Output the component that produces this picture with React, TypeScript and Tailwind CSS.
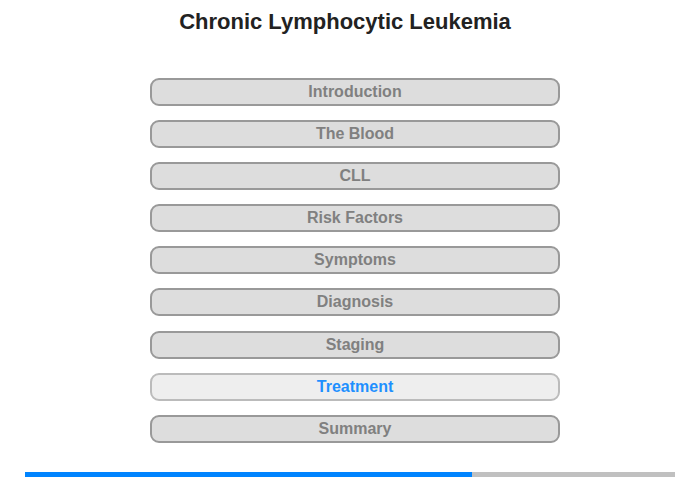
const sections = [
  "Introduction",
  "The Blood",
  "CLL",
  "Risk Factors",
  "Symptoms",
  "Diagnosis",
  "Staging",
  "Treatment",
  "Summary",
];

const current = "Treatment";

export default function App() {
  return (
    <div className="w-[700px] h-[480px] bg-white font-['Liberation_Sans',Arial,sans-serif] overflow-hidden">
      <h1 className="pt-[9px] text-center text-[22px] leading-[26px] font-bold text-[#222] pr-[10px]">
        Chronic Lymphocytic Leukemia
      </h1>

      <nav className="mt-[43px] ml-[150px] w-[410px] flex flex-col gap-[14.1px]">
        {sections.map((title) => {
          const active = title === current;
          return (
            <button
              key={title}
              className={
                active
                  ? "h-[28px] rounded-[9px] border-2 border-[#bbbbbb] bg-[#eeeeee] text-[16px] font-bold leading-none text-[#1e90ff]"
                  : "h-[28px] rounded-[9px] border-2 border-[#999999] bg-[#dddddd] text-[16px] font-bold leading-none text-[#808080]"
              }
            >
              {title}
            </button>
          );
        })}
      </nav>

      <div className="mt-[29px] ml-[25px] w-[650px] h-[5px] bg-[#c0c0c0] flex">
        <div className="w-[447px] h-full bg-[#0084ff]"></div>
      </div>
    </div>
  );
}
